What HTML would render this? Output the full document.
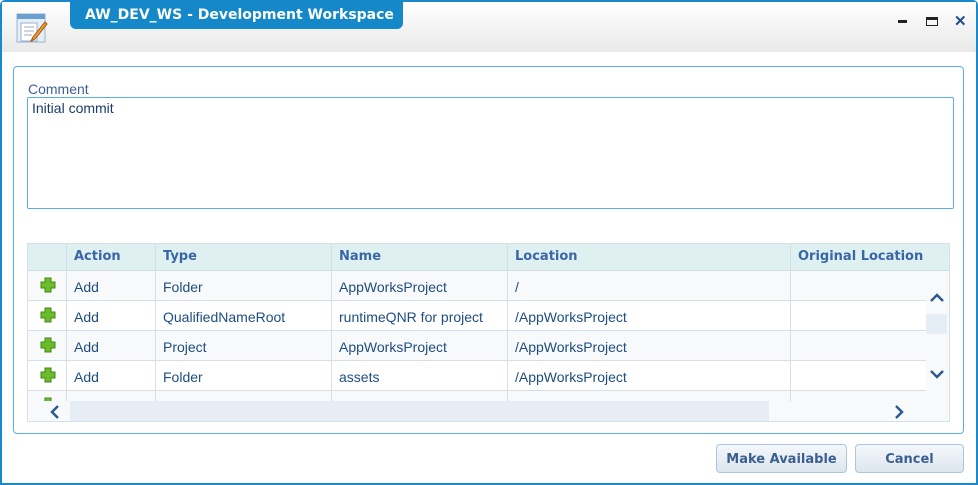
<!DOCTYPE html>
<html><head><style>
*{box-sizing:border-box;margin:0;padding:0}
body{width:978px;height:485px;overflow:hidden;background:#fff;font-family:"Liberation Sans",Tahoma,sans-serif;position:relative}
.win{position:absolute;left:0;top:0;width:978px;height:485px;border:2px solid #1a88cc;border-radius:5px 5px 0 0;background:#fff}
.tb{position:absolute;left:0;top:0;width:974px;height:50px;background:linear-gradient(#fff,#e9e9e9)}
.tab{position:absolute;left:68px;top:-2px;width:333px;height:29px;background:#1588ca;border-radius:0 0 6px 6px;color:#fff;font-weight:bold;padding:7px 0 0 15px;font-family:"DejaVu Sans",sans-serif;font-size:14px}
.panel{position:absolute;left:13px;top:66px;width:951px;height:368px;border:1px solid #5aaee2;border-radius:4px}
.lbl{position:absolute;left:28px;top:81px;font-size:14px;color:#3c5f96}
.ta{position:absolute;left:27px;top:97px;width:927px;height:112px;border:1px solid #5aaee2;border-radius:2px;font-size:14px;color:#1c3c6c;padding:2px 4px}
.tbl{position:absolute;left:27px;top:243px;width:923px;height:179px;border:1px solid #d4e0ea;overflow:hidden;background:#f8f9fa}
.hdr{position:absolute;left:0;top:0;height:27px;width:922px;background:#dff0f0;border-bottom:1px solid #d0dde8}
.row{position:absolute;left:0;height:30px;width:898px;border-bottom:1px solid #d6dee8;font-size:14px;color:#1e4d80}
.c{position:absolute;top:0;height:100%;border-left:1px solid #d6dee8;padding:8px 0 0 7px;white-space:nowrap}
.hdr .c{font-weight:bold;color:#3a66a6;padding-top:5px;font-family:"DejaVu Sans",sans-serif;font-size:13px}
.plus{position:absolute;left:12px;top:6px}
.btn{position:absolute;top:444px;height:29px;border:1px solid #aac6e0;border-radius:4px;background:linear-gradient(#f4f7fb,#dde6ee);color:#3a5f90;font-weight:bold;font-size:13px;text-align:center;padding-top:7px;font-family:"DejaVu Sans",sans-serif}
</style></head><body>
<div class="win">
<div class="tb"></div>
<svg style="position:absolute;left:13px;top:10px" width="36" height="34"><rect x="2" y="2" width="28" height="28" fill="#e4eef7" stroke="#9bb3cc"/><rect x="2" y="2" width="28" height="5" fill="#6aa0d0"/><rect x="6" y="11" width="16" height="18" fill="#fff" stroke="#9bb3cc"/><line x1="9" y1="15" x2="19" y2="15" stroke="#9ab"/><line x1="9" y1="19" x2="19" y2="19" stroke="#9ab"/><line x1="9" y1="23" x2="17" y2="23" stroke="#9ab"/><path d="M30 10 L18 25 L16 29 L20 27 L32 12Z" fill="#f0a030" stroke="#a05010"/></svg>
<div class="tab">AW_DEV_WS - Development Workspace</div>
<div style="position:absolute;left:896px;top:18px;width:9px;height:3px;background:#222"></div>
<div style="position:absolute;left:924px;top:15px;width:12px;height:9px;border:1px solid #222;border-top-width:3px"></div>
<div style="position:absolute;left:952px;top:10px;font-size:15px;font-weight:bold;color:#1d4f8c">✕</div>
</div>
<div class="panel"></div>
<div class="lbl">Comment</div>
<div class="ta">Initial commit</div>
<div class="tbl">
<div class="hdr"><div class="c" style="left:38px">Action</div><div class="c" style="left:127px">Type</div><div class="c" style="left:303px">Name</div><div class="c" style="left:479px">Location</div><div class="c" style="left:762px">Original Location</div></div>
<div class="row" style="top:27px;background:#f8f9fa"><svg class="plus" width="16" height="16"><path d="M5 1h6v4h4v6h-4v4H5v-4H1V5h4z" fill="#6cbb2a" stroke="#3d8a10"/></svg><div class="c" style="left:38px">Add</div><div class="c" style="left:127px">Folder</div><div class="c" style="left:303px">AppWorksProject</div><div class="c" style="left:479px">/</div><div class="c" style="left:762px"></div></div>
<div class="row" style="top:57px;background:#fff"><svg class="plus" width="16" height="16"><path d="M5 1h6v4h4v6h-4v4H5v-4H1V5h4z" fill="#6cbb2a" stroke="#3d8a10"/></svg><div class="c" style="left:38px">Add</div><div class="c" style="left:127px">QualifiedNameRoot</div><div class="c" style="left:303px">runtimeQNR for project</div><div class="c" style="left:479px">/AppWorksProject</div><div class="c" style="left:762px"></div></div>
<div class="row" style="top:87px;background:#f8f9fa"><svg class="plus" width="16" height="16"><path d="M5 1h6v4h4v6h-4v4H5v-4H1V5h4z" fill="#6cbb2a" stroke="#3d8a10"/></svg><div class="c" style="left:38px">Add</div><div class="c" style="left:127px">Project</div><div class="c" style="left:303px">AppWorksProject</div><div class="c" style="left:479px">/AppWorksProject</div><div class="c" style="left:762px"></div></div>
<div class="row" style="top:117px;background:#fff"><svg class="plus" width="16" height="16"><path d="M5 1h6v4h4v6h-4v4H5v-4H1V5h4z" fill="#6cbb2a" stroke="#3d8a10"/></svg><div class="c" style="left:38px">Add</div><div class="c" style="left:127px">Folder</div><div class="c" style="left:303px">assets</div><div class="c" style="left:479px">/AppWorksProject</div><div class="c" style="left:762px"></div></div>
<div class="row" style="top:147px;background:#f8f9fa"><svg class="plus" width="16" height="16"><path d="M5 1h6v4h4v6h-4v4H5v-4H1V5h4z" fill="#6cbb2a" stroke="#3d8a10"/></svg><div class="c" style="left:38px"></div><div class="c" style="left:127px"></div><div class="c" style="left:303px"></div><div class="c" style="left:479px"></div><div class="c" style="left:762px"></div></div>
<div style="position:absolute;left:898px;top:27px;width:23px;height:132px;background:#f8f9fa"></div>
<div style="position:absolute;left:898px;top:70px;width:21px;height:20px;background:#e6edf4"></div>
<svg style="position:absolute;left:901px;top:49px" width="16" height="10"><path d="M2 8L8 2L14 8" fill="none" stroke="#2d5b8e" stroke-width="2.5"/></svg>
<svg style="position:absolute;left:901px;top:125px" width="16" height="10"><path d="M2 2L8 8L14 2" fill="none" stroke="#2d5b8e" stroke-width="2.5"/></svg>
<div style="position:absolute;left:0;top:157px;width:922px;height:20px;background:#f8f9fa"></div>
<div style="position:absolute;left:42px;top:157px;width:699px;height:20px;background:#e6edf4"></div>
<svg style="position:absolute;left:21px;top:160px" width="12" height="16"><path d="M9 2L3 8L9 14" fill="none" stroke="#2d5b8e" stroke-width="2.5"/></svg>
<svg style="position:absolute;left:865px;top:160px" width="12" height="16"><path d="M3 2L9 8L3 14" fill="none" stroke="#2d5b8e" stroke-width="2.5"/></svg>
</div>
<div class="btn" style="left:716px;width:131px">Make Available</div>
<div class="btn" style="left:855px;width:109px">Cancel</div>
</body></html>
